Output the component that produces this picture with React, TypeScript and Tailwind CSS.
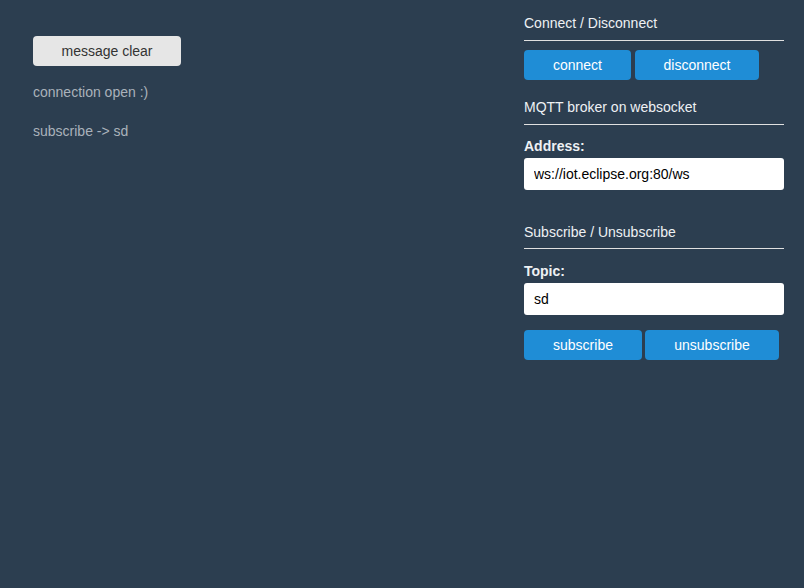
import React from "react";

const btn =
  "h-[30px] rounded-[4px] bg-[#1f8dd6] text-white text-[14px] leading-[30px] text-center";

export default function App() {
  return (
    <div
      className="w-[804px] h-[588px] bg-[#2c3e50] flex text-[14px]"
      style={{ fontFamily: '"Liberation Sans", Arial, sans-serif' }}
    >
      <div className="w-[524px] pl-[33px] pt-[36px] flex flex-col">
        <button className="w-[148px] h-[30px] rounded-[4px] bg-[#e6e6e6] text-[#333] text-[14px]">
          message clear
        </button>
        <div className="mt-[18px] text-[#aab2bb] leading-[16px]">connection open :)</div>
        <div className="mt-[23px] text-[#aab2bb] leading-[16px]">subscribe -&gt; sd</div>
      </div>
      <div className="w-[260px] pt-[15px] flex flex-col text-[#eef1f4]">
        <div className="leading-[16px]">Connect / Disconnect</div>
        <div className="mt-[9px] h-px bg-[#e0e0e0]" />
        <div className="mt-[9px] flex gap-[4px]">
          <button className={`${btn} w-[107px]`}>connect</button>
          <button className={`${btn} w-[124px]`}>disconnect</button>
        </div>
        <div className="mt-[19px] leading-[16px]">MQTT broker on websocket</div>
        <div className="mt-[9px] h-px bg-[#e0e0e0]" />
        <div className="mt-[13px] font-bold leading-[16px]">Address:</div>
        <input
          className="mt-[4px] h-[32px] w-[260px] rounded-[3px] bg-white text-black px-[10px] text-[14px] outline-none"
          defaultValue="ws://iot.eclipse.org:80/ws"
        />
        <div className="mt-[34px] leading-[16px]">Subscribe / Unsubscribe</div>
        <div className="mt-[8px] h-px bg-[#e0e0e0]" />
        <div className="mt-[14px] font-bold leading-[16px]">Topic:</div>
        <input
          className="mt-[4px] h-[32px] w-[260px] rounded-[3px] bg-white text-black px-[10px] text-[14px] outline-none"
          defaultValue="sd"
        />
        <div className="mt-[15px] flex gap-[3px]">
          <button className={`${btn} w-[118px]`}>subscribe</button>
          <button className={`${btn} w-[134px]`}>unsubscribe</button>
        </div>
      </div>
    </div>
  );
}
